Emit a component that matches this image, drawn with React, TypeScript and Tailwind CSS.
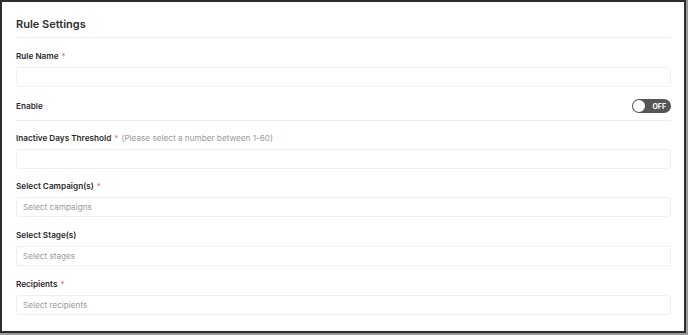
import React from "react";

type FieldProps = {
  label: string;
  required?: boolean;
  hint?: string;
  placeholder?: string;
  className?: string;
};

function Field({ label, required, hint, placeholder, className }: FieldProps) {
  return (
    <div className={className}>
      <div className="h-[12px] flex items-center text-[8.2px] leading-[12px]">
        <span className="font-semibold text-[#2b2b2b]">{label}</span>
        {required && <span className="ml-[3px] text-[#f0715a]">*</span>}
        {hint && <span className="ml-[3px] text-[#9a9a9a]">{hint}</span>}
      </div>
      <div className="mt-[5px] h-[20px] rounded-[3px] border border-[#efefef] flex items-center px-[6px] text-[8.2px] text-[#9b9b9b]">
        {placeholder}
      </div>
    </div>
  );
}

export default function App() {
  return (
    <div
      className="w-[688px] h-[335px] bg-[#9a9a9a] overflow-hidden"
      style={{ fontFamily: "Inter, 'Noto Sans', sans-serif" }}
    >
      <div className="w-[686px] h-[333px] bg-white border-2 border-[#2e2e2e] pl-[14px] pr-[13px] pt-[13px]">
        {/* header */}
        <div className="h-[23px] pb-[3px] border-b border-[#eeeeee] flex items-center text-[11px] font-semibold text-[#2f2f2f]">
          Rule Settings
        </div>

        <Field label="Rule Name" required className="mt-[12px]" />

        {/* enable toggle */}
        <div className="mt-[12px] pb-[7px] border-b border-[#eeeeee]">
          <div className="h-[14px] flex items-center justify-between">
            <span className="text-[8.2px] font-semibold text-[#2b2b2b]">Enable</span>
            <div className="w-[39px] h-[14px] rounded-full bg-[#565656] flex items-center pl-[1px] pr-[5px]">
              <div className="w-[12px] h-[12px] rounded-full bg-white" />
              <span className="ml-auto text-[7px] font-bold text-white leading-none">OFF</span>
            </div>
          </div>
        </div>

        <Field
          label="Inactive Days Threshold"
          required
          hint="(Please select a number between 1-60)"
          className="mt-[11px]"
        />
        <Field
          label="Select Campaign(s)"
          required
          placeholder="Select campaigns"
          className="mt-[11px]"
        />
        <Field label="Select Stage(s)" placeholder="Select stages" className="mt-[12px]" />
        <Field
          label="Recipients"
          required
          placeholder="Select recipients"
          className="mt-[12px]"
        />
      </div>
    </div>
  );
}
